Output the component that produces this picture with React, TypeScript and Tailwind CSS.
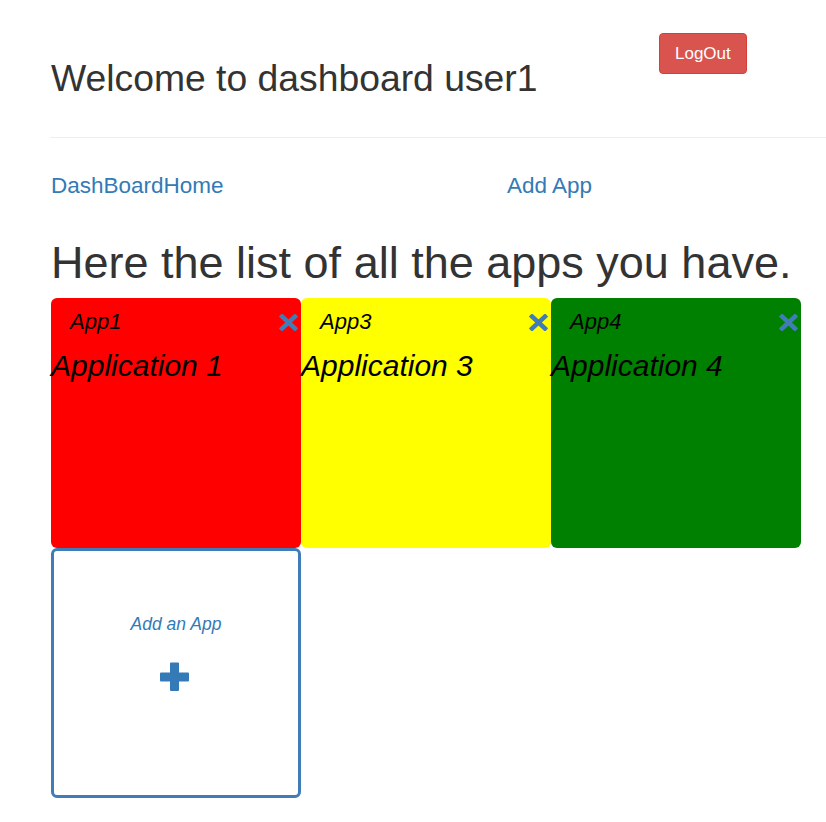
import React from 'react';

interface AppCard {
  id: string;
  name: string;
  title: string;
  color: string;
}

const APPS: AppCard[] = [
  { id: 'app1', name: 'App1', title: 'Application 1', color: 'bg-[#ff0000]' },
  { id: 'app3', name: 'App3', title: 'Application 3', color: 'bg-[#ffff00]' },
  { id: 'app4', name: 'App4', title: 'Application 4', color: 'bg-[#008000]' },
];

const RemoveIcon = () => (
  <svg width="19" height="17" viewBox="0 0 19 17" className="shrink-0">
    <path d="M3 2.5 L16 14.5 M16 2.5 L3 14.5" stroke="#3f7cb8" strokeWidth="4.5" strokeLinecap="square" />
  </svg>
);

const PlusIcon = () => (
  <svg width="29" height="29" viewBox="0 0 29 29">
    <path d="M11 0.5 h7 a1 1 0 0 1 1 1 v9 h9 a1 1 0 0 1 1 1 v7 a1 1 0 0 1 -1 1 h-9 v8.5 a1 1 0 0 1 -1 1 h-7 a1 1 0 0 1 -1 -1 v-8.5 h-9 a1 1 0 0 1 -1 -1 v-7 a1 1 0 0 1 1 -1 h9 v-9 a1 1 0 0 1 1 -1 z" fill="#337ab7" />
  </svg>
);

const App: React.FC = () => {
  return (
    <div className="w-full min-h-[822px] bg-white pl-[50px] font-['Liberation_Sans',Arial,sans-serif] text-[#333333]">
      {/* header */}
      <div className="flex items-start">
        <h1 className="mt-[58px] w-[609px] pl-px text-[37.3px] leading-[41px] font-normal">Welcome to dashboard user1</h1>
        <button className="mt-[33px] h-[41px] rounded-[4px] border border-[#d43f3a] bg-[#d9534f] px-[15px] text-[17px] leading-none text-white">
          LogOut
        </button>
      </div>
      <hr className="mt-[38px] border-t border-[#eeeeee]" />

      {/* nav */}
      <nav className="mt-[35px] flex pl-px text-[22.5px] leading-[25px] text-[#337ab7]">
        <a className="w-[456px]">DashBoardHome</a>
        <a>Add App</a>
      </nav>

      <h2 className="mt-[40px] pl-px text-[45px] leading-[50px] font-normal">Here the list of all the apps you have.</h2>

      {/* apps */}
      <div className="mt-[10px] grid w-[750px] grid-cols-[250px_250px_250px] pl-px">
        {APPS.map(app => (
          <div key={app.id} className={`h-[250px] rounded-[6px] ${app.color} text-black italic`}>
            <div className="flex items-center justify-between pt-[12px] pl-[19px] pr-[3px]">
              <span className="text-[22px] leading-[24px]">{app.name}</span>
              <RemoveIcon />
            </div>
            <div className="mt-[15px] text-[30px] leading-[33px]">{app.title}</div>
          </div>
        ))}
        <div className="flex h-[250px] flex-col items-center rounded-[6px] border-[3px] border-[#3f7cb8] pt-[63px]">
          <span className="text-[17.5px] leading-[20px] italic text-[#337ab7]">Add an App</span>
          <div className="mt-[28px] mr-[4px]">
            <PlusIcon />
          </div>
        </div>
      </div>
    </div>
  );
};

export default App;
